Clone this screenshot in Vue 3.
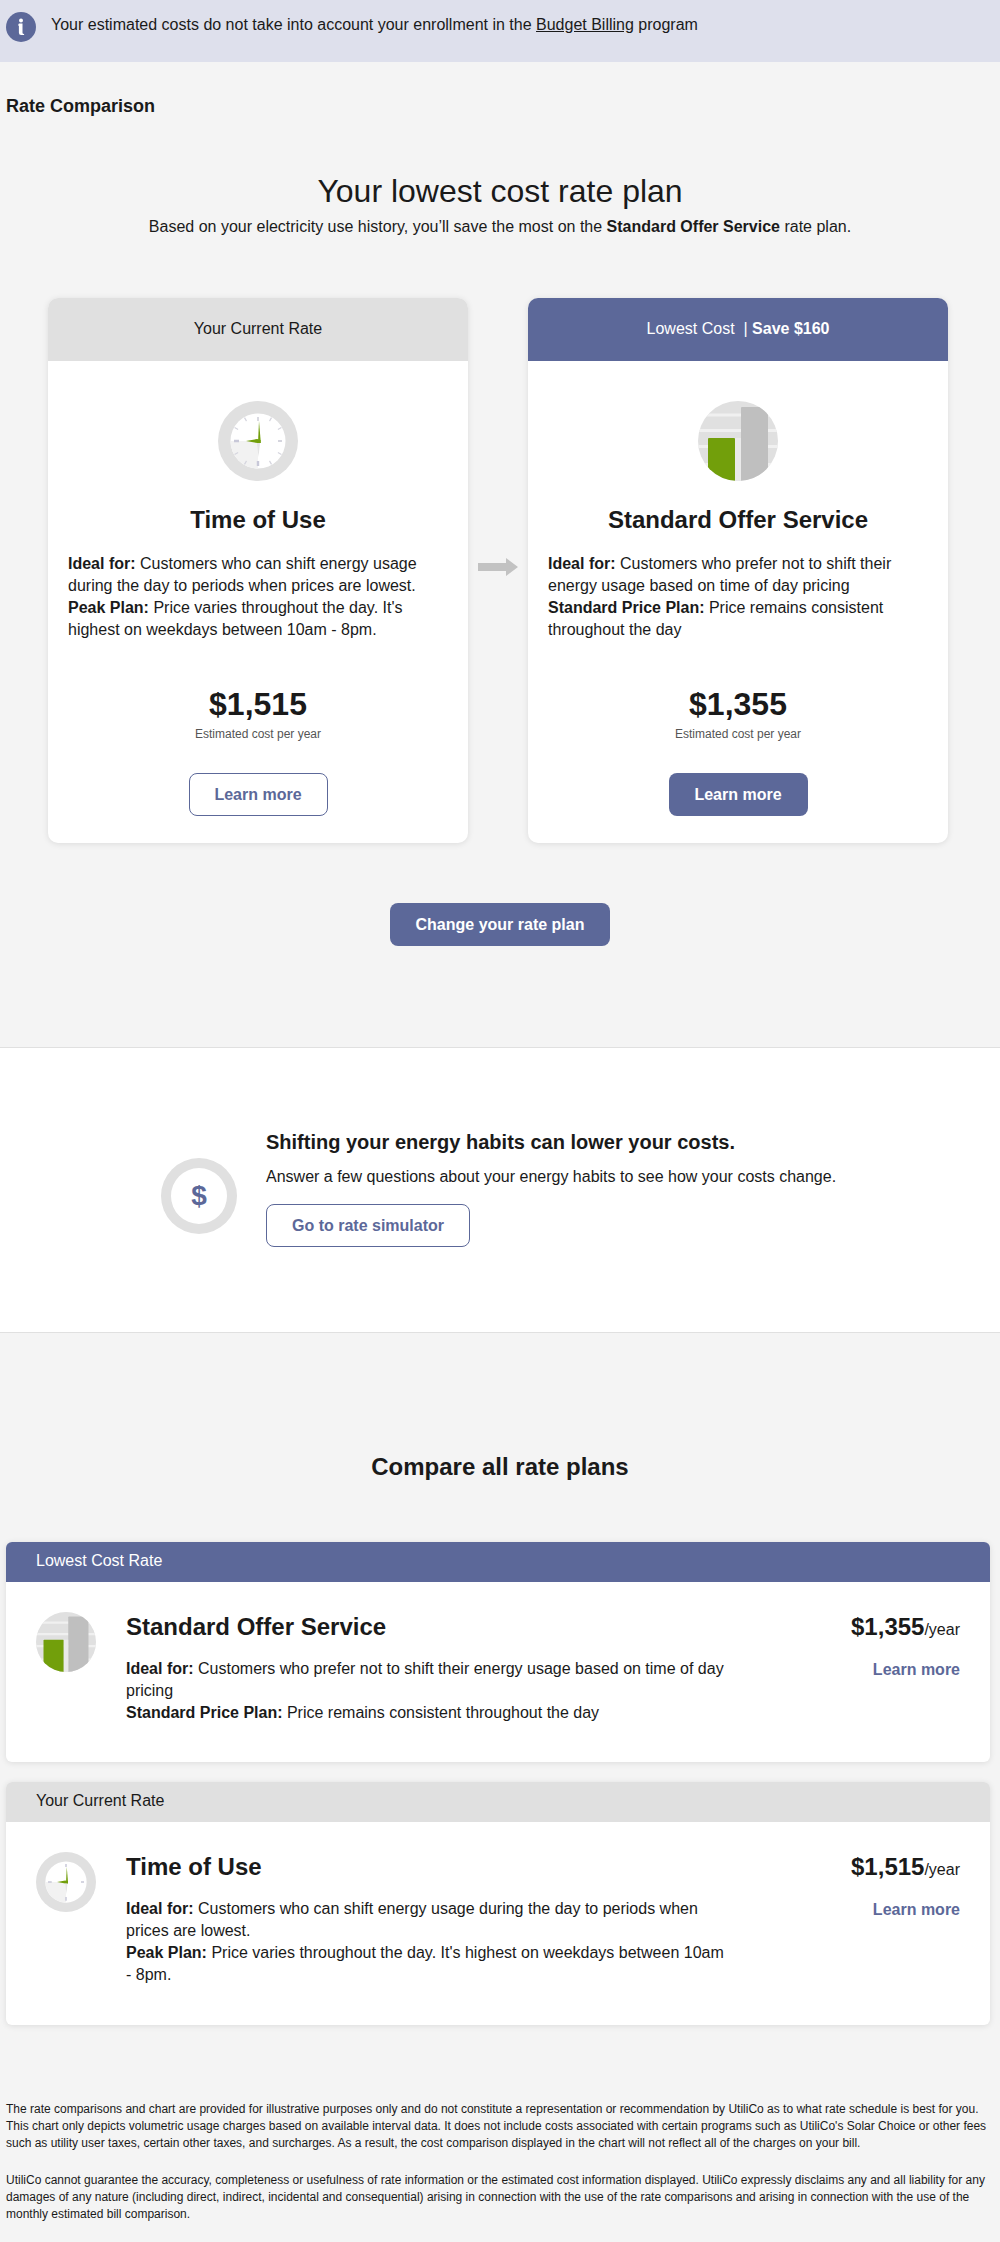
<template>
  <div class="page">
    <div class="banner">
      <svg class="info-icon" viewBox="0 0 30 30">
        <circle cx="15" cy="15" r="15" fill="#5c6899" />
        <circle cx="15" cy="8.5" r="2" fill="#fff" />
        <path d="M12.5 12.5h3.6v9.2q0 1.3 1.6 1.3v1h-3q-2.2 0-2.2-2.2v-7.3h-1z" fill="#fff" transform="translate(0.4 -1)" />
      </svg>
      <p>Your estimated costs do not take into account your enrollment in the <a href="#">Budget Billing</a> program</p>
    </div>

    <h2 class="page-title">Rate Comparison</h2>

    <section class="hero">
      <h1>Your lowest cost rate plan</h1>
      <p>Based on your electricity use history, you’ll save the most on the <b>Standard Offer Service</b> rate plan.</p>
    </section>

    <div class="plans">
      <div class="plan-card">
        <div class="plan-head grey">Your Current Rate</div>
        <div class="plan-body">
          <svg class="plan-icon" viewBox="0 0 80 80">
            <circle cx="40" cy="40" r="40" fill="#e0e0e0" />
            <circle cx="40" cy="40" r="27.5" fill="#fff" />
            <path d="M40 40V67.5A27.5 27.5 0 0 1 12.5 40z" fill="#f2f2f2" />
            <g stroke="#d5d5de" stroke-width="1.2">
              <path d="M53.5 16.6l-2 3.5M63.4 26.5l-3.5 2M63.4 53.5l-3.5-2M53.5 63.4l-2-3.5M26.5 63.4l2-3.5M16.6 53.5l3.5-2M16.6 26.5l3.5 2M26.5 16.6l2 3.5" />
              <path d="M40 16v4M64 40h-4" stroke-width="1.8" />
              <path d="M40 60v5M16 40h5" stroke="#c8c8d8" stroke-width="2.4" />
            </g>
            <path d="M39 17l3 23-1 2-3 0-1 0z" fill="#e4e4e4" opacity="0" />
            <path d="M38 41l1-1 1.5-26 0 0 1.8 27-1.2 1.4z" fill="#e2e2e2" opacity="0" />
            <path d="M40 42h2.6v-3L41 20z" fill="#729f0b" />
            <path d="M28 40l11-2 3.6 1v3h-3.2z" fill="#729f0b" />
            <path d="M39 42h3l-1.5 14z" fill="#e4e4e4" />
          </svg>
          <h3>Time of Use</h3>
          <div class="plan-desc">
            <p class="first"><b>Ideal for:</b> Customers who can shift energy usage during the day to periods when prices are lowest.</p>
            <p><b>Peak Plan:</b> Price varies throughout the day. It's highest on weekdays between 10am - 8pm.</p>
          </div>
          <div class="price">$1,515</div>
          <div class="price-note">Estimated cost per year</div>
          <a class="btn outline small" href="#">Learn more</a>
        </div>
      </div>

      <svg class="arrow" viewBox="0 0 40 18">
        <path d="M0 5h28V0l12 9-12 9v-5H0z" fill="#c2c2c2" />
      </svg>

      <div class="plan-card">
        <div class="plan-head blue">Lowest Cost &nbsp;| <b>Save $160</b></div>
        <div class="plan-body">
          <svg class="plan-icon" viewBox="0 0 80 80">
            <defs>
              <clipPath id="barClip"><circle cx="40" cy="40" r="40" /></clipPath>
            </defs>
            <g clip-path="url(#barClip)">
              <rect width="80" height="80" fill="#e0e0e0" />
              <path d="M0 12.5h80v3H0zM0 28h80v3H0zM0 44h80v3H0zM0 62h80v3H0z" fill="#f0f0f0" />
              <path d="M10 38q0-1 1-1h25q1 0 1 1v42H10z" fill="#729f0b" />
              <path d="M43 7q0-1 1-1h25q1 0 1 1v73H43z" fill="#bfbfbf" />
              <rect x="37" y="37" width="6" height="43" fill="#eaeaea" />
            </g>
          </svg>
          <h3>Standard Offer Service</h3>
          <div class="plan-desc">
            <p class="first"><b>Ideal for:</b> Customers who prefer not to shift their energy usage based on time of day pricing</p>
            <p><b>Standard Price Plan:</b> Price remains consistent throughout the day</p>
          </div>
          <div class="price">$1,355</div>
          <div class="price-note">Estimated cost per year</div>
          <a class="btn solid small" href="#">Learn more</a>
        </div>
      </div>
    </div>

    <div class="change-row">
      <a class="btn solid wide" href="#">Change your rate plan</a>
    </div>

    <section class="shift">
      <div class="dollar">$</div>
      <div class="shift-text">
        <h4>Shifting your energy habits can lower your costs.</h4>
        <p>Answer a few questions about your energy habits to see how your costs change.</p>
        <a class="btn outline sim" href="#">Go to rate simulator</a>
      </div>
    </section>

    <h2 class="compare-title">Compare all rate plans</h2>

    <div class="row-card">
      <div class="row-head blue">Lowest Cost Rate</div>
      <div class="row-body">
        <svg class="row-icon" viewBox="0 0 80 80">
          <defs>
            <clipPath id="barClip2"><circle cx="40" cy="40" r="40" /></clipPath>
          </defs>
          <g clip-path="url(#barClip2)">
            <rect width="80" height="80" fill="#e0e0e0" />
            <path d="M0 12.5h80v3H0zM0 28h80v3H0zM0 44h80v3H0zM0 62h80v3H0z" fill="#f0f0f0" />
            <path d="M10 38q0-1 1-1h25q1 0 1 1v42H10z" fill="#729f0b" />
            <path d="M43 7q0-1 1-1h25q1 0 1 1v73H43z" fill="#bfbfbf" />
            <rect x="37" y="37" width="6" height="43" fill="#eaeaea" />
          </g>
        </svg>
        <div class="row-main">
          <h3>Standard Offer Service</h3>
          <p class="first"><b>Ideal for:</b> Customers who prefer not to shift their energy usage based on time of day pricing</p>
          <p><b>Standard Price Plan:</b> Price remains consistent throughout the day</p>
        </div>
        <div class="row-side">
          <div class="row-price"><b>$1,355</b>/year</div>
          <a class="row-link" href="#">Learn more</a>
        </div>
      </div>
    </div>

    <div class="row-card second">
      <div class="row-head grey">Your Current Rate</div>
      <div class="row-body">
        <svg class="row-icon" viewBox="0 0 80 80">
          <circle cx="40" cy="40" r="40" fill="#e0e0e0" />
          <circle cx="40" cy="40" r="27.5" fill="#fff" />
          <path d="M40 40V67.5A27.5 27.5 0 0 1 12.5 40z" fill="#f2f2f2" />
          <path d="M40 16v4M64 40h-4M40 60v5M16 40h5" stroke="#c8c8d8" stroke-width="2" />
          <path d="M40 42h2.6v-3L41 20z" fill="#729f0b" />
          <path d="M28 40l11-2 3.6 1v3h-3.2z" fill="#729f0b" />
          <path d="M39 42h3l-1.5 14z" fill="#e4e4e4" />
        </svg>
        <div class="row-main">
          <h3>Time of Use</h3>
          <p class="first"><b>Ideal for:</b> Customers who can shift energy usage during the day to periods when prices are lowest.</p>
          <p><b>Peak Plan:</b> Price varies throughout the day. It's highest on weekdays between 10am - 8pm.</p>
        </div>
        <div class="row-side">
          <div class="row-price"><b>$1,515</b>/year</div>
          <a class="row-link" href="#">Learn more</a>
        </div>
      </div>
    </div>

    <footer class="notes">
      <p>The rate comparisons and chart are provided for illustrative purposes only and do not constitute a representation or recommendation by UtiliCo as to what rate schedule is best for you. This chart only depicts volumetric usage charges based on available interval data. It does not include costs associated with certain programs such as UtiliCo's Solar Choice or other fees such as utility user taxes, certain other taxes, and surcharges. As a result, the cost comparison displayed in the chart will not reflect all of the charges on your bill.</p>
      <p>UtiliCo cannot guarantee the accuracy, completeness or usefulness of rate information or the estimated cost information displayed. UtiliCo expressly disclaims any and all liability for any damages of any nature (including direct, indirect, incidental and consequential) arising in connection with the use of the rate comparisons and arising in connection with the use of the monthly estimated bill comparison.</p>
    </footer>
  </div>
</template>

<script setup>
</script>

<style>
body {
  background: #f4f4f4;
}
</style>

<style scoped>
.page {
  width: 1000px;
  height: 2242px;
  overflow: hidden;
  background: #f4f4f4;
  color: #1a1a1a;
  font-family: "Liberation Sans", Arial, sans-serif;
  font-size: 16px;
}

p {
  margin: 0;
}

.banner {
  height: 62px;
  background: #dee0ec;
  display: flex;
  align-items: flex-start;
  padding: 12px 0 0 6px;
  box-sizing: border-box;
}

.info-icon {
  width: 30px;
  height: 30px;
  flex: none;
}

.banner p {
  margin-left: 15px;
  line-height: 28px;
  margin-top: -1px;
}

.banner a {
  color: #1a1a1a;
}

.page-title {
  margin: 33px 0 0 6px;
  font-size: 18px;
  line-height: 22px;
}

.hero {
  margin-top: 56px;
  text-align: center;
}

.hero h1 {
  margin: 0;
  font-size: 32px;
  font-weight: 400;
  line-height: 37px;
}

.hero p {
  margin-top: 6px;
  line-height: 22px;
}

.plans {
  margin: 60px 52px 0 48px;
  display: flex;
  align-items: flex-start;
}

.plan-card {
  width: 420px;
  height: 545px;
  background: #fff;
  border-radius: 10px;
  box-shadow: 0 1px 6px rgba(0, 0, 0, 0.1);
  overflow: hidden;
}

.plan-head {
  height: 63px;
  line-height: 61px;
  text-align: center;
}

.grey {
  background: #e0e0e0;
}

.blue {
  background: #5c6899;
  color: #fff;
}

.plan-body {
  display: flex;
  flex-direction: column;
  align-items: center;
  padding: 40px 20px 0;
}

.plan-icon {
  width: 80px;
  height: 80px;
}

.plan-body h3 {
  margin: 24px 0 0;
  font-size: 24px;
  line-height: 30px;
  text-align: center;
}

.plan-desc {
  align-self: stretch;
  margin-top: 18px;
  height: 116px;
  padding-right: 30px;
  line-height: 22px;
}

.plan-desc .first {
  margin-bottom: 0;
}

.plan-desc p {
  line-height: 22px;
}

.arrow {
  width: 40px;
  height: 18px;
  margin: 260px 10px 0;
  flex: none;
}

.price {
  margin-top: 16px;
  font-size: 32px;
  font-weight: 700;
  line-height: 38px;
}

.price-note {
  margin-top: 4px;
  font-size: 12px;
  line-height: 14px;
  color: #555;
}

.btn {
  display: block;
  box-sizing: border-box;
  text-align: center;
  font-weight: 700;
  text-decoration: none;
  border-radius: 8px;
}

.outline {
  border: 1px solid #5c6899;
  color: #5c6899;
  background: #fff;
}

.solid {
  background: #5c6899;
  color: #fff;
}

.small {
  width: 139px;
  height: 43px;
  line-height: 41px;
  margin-top: 32px;
}

.solid.small {
  line-height: 43px;
}

.change-row {
  margin-top: 60px;
  display: flex;
  justify-content: center;
}

.wide {
  width: 220px;
  height: 43px;
  line-height: 43px;
}

.shift {
  margin-top: 101px;
  height: 286px;
  box-sizing: border-box;
  background: #fff;
  border-top: 1px solid #e0e0e0;
  border-bottom: 1px solid #e0e0e0;
  display: flex;
  padding: 82px 0 0 161px;
}

.dollar {
  width: 76px;
  height: 76px;
  box-sizing: content-box;
  margin-top: 28px;
  border: 0;
  border-radius: 50%;
  box-shadow: inset 0 0 0 10px #e0e0e0;
  text-align: center;
  line-height: 76px;
  font-size: 28px;
  font-weight: 700;
  color: #5c6899;
  flex: none;
}

.shift-text {
  margin-left: 29px;
}

.shift-text h4 {
  margin: 0;
  font-size: 20px;
  line-height: 24px;
}

.shift-text p {
  margin-top: 12px;
  line-height: 22px;
}

.sim {
  width: 204px;
  height: 43px;
  line-height: 41px;
  margin-top: 16px;
}

.compare-title {
  margin: 120px 0 0;
  text-align: center;
  font-size: 24px;
  line-height: 28px;
}

.row-card {
  margin: 61px 10px 0 6px;
  background: #fff;
  border-radius: 6px;
  box-shadow: 0 1px 6px rgba(0, 0, 0, 0.1);
  overflow: hidden;
  height: 220px;
}

.row-card.second {
  margin-top: 20px;
  height: 243px;
}

.row-head {
  height: 40px;
  line-height: 38px;
  padding-left: 30px;
}

.row-body {
  display: flex;
  align-items: flex-start;
  padding: 30px 30px 0;
}

.row-icon {
  width: 60px;
  height: 60px;
  flex: none;
}

.row-main {
  margin-left: 30px;
  width: 600px;
  line-height: 22px;
}

.row-main h3 {
  margin: 0 0 16px;
  font-size: 24px;
  line-height: 30px;
  font-weight: 700;
}

.row-side {
  margin-left: auto;
  text-align: right;
}

.row-price {
  line-height: 30px;
}

.row-price b {
  font-size: 24px;
}

.row-link {
  display: block;
  margin-top: 14px;
  color: #5c6899;
  font-weight: 700;
  text-decoration: none;
  line-height: 22px;
}

.notes {
  margin: 76px 0 0 6px;
  width: 990px;
  font-size: 12px;
  line-height: 17px;
}

.notes p + p {
  margin-top: 20px;
}
</style>
